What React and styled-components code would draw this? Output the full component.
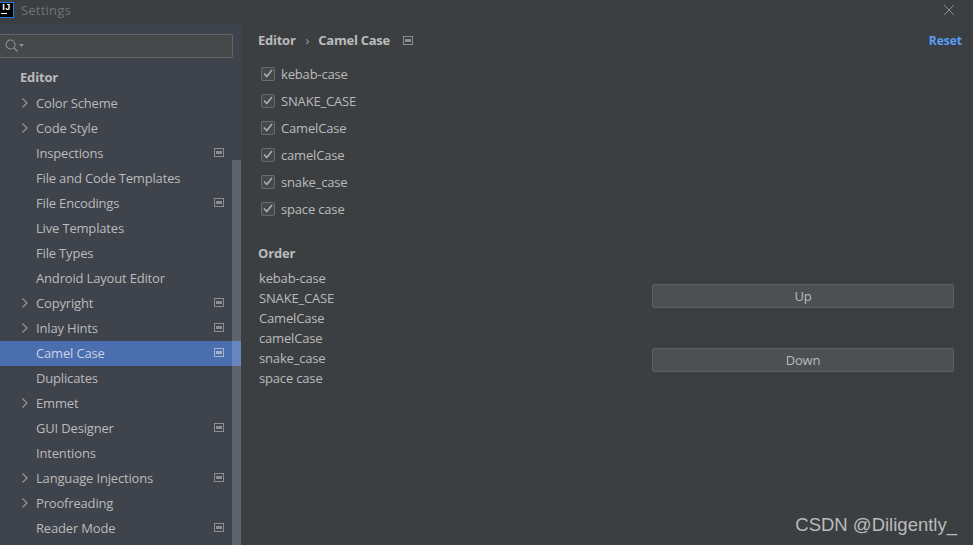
import React from 'react';
import styled, { createGlobalStyle } from 'styled-components';

const GlobalStyle = createGlobalStyle`
  html, body {
    margin: 0;
    padding: 0;
    background: #3c3f41;
  }
  body {
    font-family: "Open Sans", "Noto Sans", sans-serif;
    font-size: 13px;
    letter-spacing: -0.17px;
    color: #bbbbbb;
  }
`;

const sections = [
  { name: 'Color Scheme', arrow: true },
  { name: 'Code Style', arrow: true },
  { name: 'Inspections', badge: true },
  { name: 'File and Code Templates' },
  { name: 'File Encodings', badge: true },
  { name: 'Live Templates' },
  { name: 'File Types' },
  { name: 'Android Layout Editor' },
  { name: 'Copyright', arrow: true, badge: true },
  { name: 'Inlay Hints', arrow: true, badge: true },
  { name: 'Camel Case', badge: true, active: true },
  { name: 'Duplicates' },
  { name: 'Emmet', arrow: true },
  { name: 'GUI Designer', badge: true },
  { name: 'Intentions' },
  { name: 'Language Injections', arrow: true, badge: true },
  { name: 'Proofreading', arrow: true },
  { name: 'Reader Mode', badge: true },
];

const cases = ['kebab-case', 'SNAKE_CASE', 'CamelCase', 'camelCase', 'snake_case', 'space case'];

const ProjectIcon = ({ color = '#8c8f91' }) => (
  <svg width="10" height="9" viewBox="0 0 10 9" fill="none">
    <rect x="0.5" y="0.5" width="9" height="8" stroke={color} />
    <rect x="2" y="3" width="6" height="3" fill={color} />
  </svg>
);

const Chevron = () => (
  <svg width="8" height="12" viewBox="0 0 8 12" fill="none">
    <path d="M1.5 1.5 6 6l-4.500 4.500" stroke="#9a9da0" strokeWidth="1.1" />
  </svg>
);

const App = () => (
  <Window>
    <GlobalStyle />
    <TitleBar>
      <AppLogo>
        <span>IJ</span>
        <i />
      </AppLogo>
      <WindowTitle>Settings</WindowTitle>
      <CloseIcon width="12" height="12" viewBox="0 0 12 12" fill="none">
        <path d="M1 1l10 10M11 1 1 11" stroke="#8a8c8e" strokeWidth="1" />
      </CloseIcon>
    </TitleBar>
    <Body>
      <Sidebar>
        <SearchBox>
          <svg width="20" height="16" viewBox="0 0 20 16" fill="none">
            <circle cx="6.500" cy="6.500" r="4.500" stroke="#8f9294" strokeWidth="1.100" />
            <path d="M10 10l3.500 3.500" stroke="#8f9294" strokeWidth="1.300" />
            <path d="M15 6h5l-2.500 3z" fill="#8f9294" />
          </svg>
        </SearchBox>
        <GroupTitle>Editor</GroupTitle>
        {sections.map((item) => (
          <NavRow key={item.name} $active={item.active}>
            <ArrowSlot>{item.arrow && <Chevron />}</ArrowSlot>
            <NavLabel>{item.name}</NavLabel>
            {item.badge && <ProjectIcon color={item.active ? '#a3b4cf' : '#8c8f91'} />}
          </NavRow>
        ))}
        <ScrollThumb />
      </Sidebar>
      <Content>
        <Header>
          <Crumb>Editor</Crumb>
          <CrumbSep>›</CrumbSep>
          <Crumb>Camel Case</Crumb>
          <HeaderBadge>
            <ProjectIcon />
          </HeaderBadge>
          <ResetLink>Reset</ResetLink>
        </Header>
        <CheckList>
          {cases.map((name) => (
            <CheckRow key={name}>
              <CheckBox>
                <svg width="10" height="9" viewBox="0 0 10 9" fill="none">
                  <path d="M1 4.500 3.800 7.500 9 1" stroke="#a9abad" strokeWidth="1.700" />
                </svg>
              </CheckBox>
              {name}
            </CheckRow>
          ))}
        </CheckList>
        <SectionTitle>Order</SectionTitle>
        <OrderPanel>
          <OrderList>
            {cases.map((name) => (
              <OrderItem key={name}>{name}</OrderItem>
            ))}
          </OrderList>
          <ButtonColumn>
            <Button>Up</Button>
            <Button>Down</Button>
          </ButtonColumn>
        </OrderPanel>
      </Content>
    </Body>
    <Watermark>CSDN @Diligently_</Watermark>
  </Window>
);

const Window = styled.div`
  position: relative;
  width: 973px;
  height: 545px;
  overflow: hidden;
  background: #3c3f41;
`;

const TitleBar = styled.div`
  display: flex;
  align-items: center;
  height: 24px;
  background: #3c3f41;
`;

const AppLogo = styled.div`
  box-sizing: border-box;
  width: 14px;
  height: 16px;
  margin-top: -4px;
  background: #000;
  border: 1px solid #2a7be0;
  border-left: none;
  color: #fff;
  font: bold 9px/9px "Liberation Sans", sans-serif;
  letter-spacing: 0.5px;
  text-align: center;

  span {
    display: block;
  }

  i {
    display: block;
    width: 6px;
    height: 1px;
    margin: 1px 0 0 1px;
    background: #fff;
  }
`;

const WindowTitle = styled.div`
  margin: -4px 0 0 7px;
  font-size: 13px;
  letter-spacing: 0.2px;
  color: #6f7274;
`;

const CloseIcon = styled.svg`
  margin: -4px 18px 0 auto;
`;

const Body = styled.div`
  display: flex;
  height: 521px;
`;

const Sidebar = styled.div`
  position: relative;
  flex: 0 0 241px;
  overflow: hidden;
  background: #3e434c;
`;

const SearchBox = styled.div`
  display: flex;
  align-items: center;
  box-sizing: border-box;
  width: 233px;
  height: 24px;
  margin-top: 10px;
  padding-left: 4px;
  background: #45494a;
  border: 1px solid #646464;
  border-left: none;
  border-radius: 0 2px 2px 0;
`;

const GroupTitle = styled.div`
  height: 26px;
  margin-top: 7px;
  padding-left: 20px;
  font-weight: 700;
  line-height: 25px;
  color: #bbbbbb;
`;

const NavRow = styled.div`
  display: flex;
  align-items: center;
  box-sizing: border-box;
  height: 25px;
  padding: 0 17px 2px 21px;
  background: ${(p) => (p.$active ? '#4b6eaf' : 'transparent')};
  color: ${(p) => (p.$active ? '#c9d3e4' : '#bbbbbb')};
`;

const ArrowSlot = styled.div`
  display: flex;
  flex: 0 0 15px;
  align-items: center;
`;

const NavLabel = styled.div`
  flex: 1;
  white-space: nowrap;
`;

const ScrollThumb = styled.div`
  position: absolute;
  top: 136px;
  right: 0;
  bottom: 0;
  width: 9px;
  background: rgba(255, 255, 255, 0.17);
`;

const Content = styled.div`
  flex: 1;
  padding: 0 11px 0 17px;
  background: #3c3f41;
`;

const Header = styled.div`
  display: flex;
  align-items: center;
  height: 32px;
`;

const Crumb = styled.div`
  font-weight: 700;
  letter-spacing: -0.25px;
  color: #bbbbbb;
`;

const CrumbSep = styled.div`
  margin: 0 9px 0 10px;
  color: #9a9da0;
`;

const HeaderBadge = styled.div`
  display: flex;
  margin-left: 13px;
`;

const ResetLink = styled.div`
  margin-left: auto;
  font-weight: 700;
  font-size: 12px;
  letter-spacing: 0;
  color: #589df6;
`;

const CheckList = styled.div`
  display: flex;
  flex-direction: column;
  margin-top: 4px;
`;

const CheckRow = styled.div`
  display: flex;
  align-items: center;
  gap: 6px;
  height: 27px;
  padding-left: 3px;
`;

const CheckBox = styled.div`
  display: flex;
  align-items: center;
  justify-content: center;
  box-sizing: border-box;
  width: 14px;
  height: 14px;
  background: #43494a;
  border: 1px solid #6b6b6b;
  border-radius: 2px;
`;

const SectionTitle = styled.div`
  height: 20px;
  margin-top: 21px;
  font-weight: 700;
  line-height: 20px;
`;

const OrderPanel = styled.div`
  display: grid;
  grid-template-columns: 394px 302px;
  margin-top: 5px;
`;

const OrderList = styled.div`
  display: flex;
  flex-direction: column;
  padding-left: 1px;
`;

const OrderItem = styled.div`
  height: 20px;
  line-height: 20px;
`;

const ButtonColumn = styled.div`
  display: flex;
  flex-direction: column;
  gap: 40px;
  padding-top: 16px;
`;

const Button = styled.button`
  box-sizing: border-box;
  height: 24px;
  padding: 0;
  background: #4c5052;
  border: 1px solid #5e6060;
  border-radius: 2px;
  color: #bbbbbb;
  font: inherit;
  letter-spacing: inherit;
`;

const Watermark = styled.div`
  position: absolute;
  right: 16px;
  bottom: 9px;
  font-family: "Liberation Sans", sans-serif;
  font-size: 18.5px;
  letter-spacing: 0;
  color: #b9bbbc;
`;

export default App;
